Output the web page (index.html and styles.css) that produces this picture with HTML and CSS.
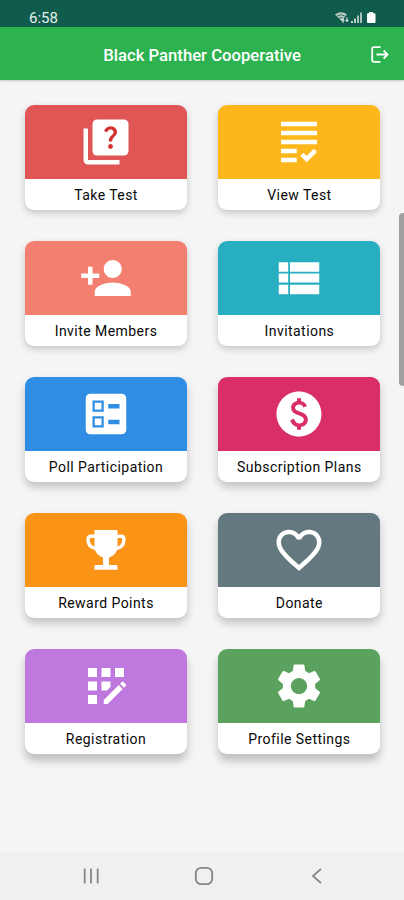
FILE: index.html
```
<!DOCTYPE html>
<html lang="en">
<head>
<meta charset="utf-8">
<title>Black Panther Cooperative</title>
<link rel="stylesheet" href="styles.css">
</head>
<body>
<div class="screen">
  <div class="status">
    <span class="time">6:58</span>
    <svg class="signals" width="44" height="14" viewBox="0 0 44 14">
      <path d="M1 3.500Q7-1 13 3.500L7.500 10z" fill="#b9cdc6"/>
      <path d="M3 5q4-2.500 8 0M5 7.200q2-1.200 4 0" fill="none" stroke="#0f5c4c" stroke-width=".8"/>
      <path d="M9 8v4M7.700 9.500L9 8l1.300 1.500M13 6.500v4M11.700 9l1.300 1.500L14.300 9" fill="none" stroke="#e4eeea" stroke-width="1.100"/>
      <path d="M17 10h2v2h-2zM20 7.500h2V12h-2z" fill="#b9cdc6"/>
      <path d="M23 4.500h2V12h-2zM26 1.500h2V12h-2z" fill="#a7c0b8"/>
      <path d="M35 1h4v1.200h1.500q1 0 1 1V11q0 1-1 1h-6.500q-1 0-1-1V3.200q0-1 1-1h1z" fill="#fff"/>
    </svg>
  </div>
  <header class="bar">
    <h1 class="title">Black Panther Cooperative</h1>
    <svg class="logout" width="18" height="17" viewBox="0 0 18 17" fill="none" stroke="#fff" stroke-width="1.800">
      <path d="M9.500 1.200H3Q1.200 1.200 1.200 3v11q0 1.800 1.800 1.800h6.500M5.500 8.500h11M12.600 4.500l4 4-4 4"/>
    </svg>
  </header>
  <main class="grid">
    <section class="card"><div class="tile red"><svg class="icon" viewBox="0 0 24 24"><path d="M4 6H2v14c0 1.100.9 2 2 2h14v-2H4z"/><rect x="6" y="2" width="16" height="16" rx="2"/><path class="question" d="M14.010 15c-.59 0-1.050-.47-1.050-1.050 0-.59.47-1.040 1.050-1.040.59 0 1.040.45 1.040 1.040-.01.58-.45 1.050-1.040 1.050zm2.500-6.170c-.63.93-1.230 1.210-1.560 1.810-.13.24-.18.4-.18 1.180h-1.520c0-.41-.06-1.080.26-1.650.41-.73 1.180-1.160 1.630-1.800.48-.68.21-1.940-1.140-1.940-.88 0-1.320.67-1.500 1.230l-1.370-.57C11.510 5.960 12.520 5 13.990 5c1.230 0 2.080.56 2.510 1.260.37.61.58 1.730.01 2.570z"/></svg></div><div class="label">Take Test</div></section>
    <section class="card"><div class="tile amber"><svg class="icon" viewBox="0 0 24 24"><path d="M4 3h16v2H4zM4 7h16v2H4zM4 11h16v2H4zM4 15h7v2H4zM4 19h7v2H4zM15.410 18.170L14 16.750l-1.410 1.410L15.410 21 20 16.420 18.580 15z"/></svg></div><div class="label">View Test</div></section>
    <section class="card"><div class="tile coral"><svg class="icon" viewBox="0 0 24 24"><path d="M15 12c2.210 0 4-1.790 4-4s-1.790-4-4-4-4 1.790-4 4 1.790 4 4 4zm-9-2V7H4v3H1v2h3v3h2v-3h3v-2H6zm9 4c-2.670 0-8 1.340-8 4v2h16v-2c0-2.660-5.330-4-8-4z"/></svg></div><div class="label">Invite Members</div></section>
    <section class="card"><div class="tile teal"><svg class="icon" viewBox="0 0 24 24"><path d="M3 5h4.200v4.200H3zM3 10h4.200v4H3zM3 15h4.200v4.200H3zM8 5h13v4.200H8zM8 10h13v4H8zM8 15h13v4.200H8z"/></svg></div><div class="label">Invitations</div></section>
    <section class="card"><div class="tile blue"><svg class="icon" viewBox="0 0 24 24"><path fill-rule="evenodd" d="M13 9.500h5v-2h-5v2zm0 7h5v-2h-5v2zm6 4.500H5c-1.100 0-2-.9-2-2V5c0-1.100.9-2 2-2h14c1.100 0 2 .9 2 2v14c0 1.100-.9 2-2 2zM6 11h5V6H6v5zm1-4h3v3H7V7zM6 18h5v-5H6v5zm1-4h3v3H7v-3z"/></svg></div><div class="label">Poll Participation</div></section>
    <section class="card"><div class="tile pink"><svg class="icon" viewBox="0 0 24 24"><path d="M12 2C6.480 2 2 6.480 2 12s4.480 10 10 10 10-4.480 10-10S17.520 2 12 2zm.88 15.760V19h-1.750v-1.290c-.74-.18-2.390-.77-3.020-2.960l1.650-.67c.06.22.58 2.090 2.400 2.090.93 0 1.980-.48 1.980-1.610 0-.96-.7-1.460-2.280-2.030-1.100-.39-3.350-1.030-3.350-3.310 0-.1.01-2.400 2.620-2.960V5h1.750v1.240c1.840.32 2.510 1.790 2.660 2.230l-1.580.67c-.11-.35-.59-1.340-1.900-1.340-.7 0-1.810.37-1.810 1.390 0 .95.86 1.310 2.640 1.900 2.400.83 3.010 2.050 3.010 3.450 0 2.630-2.500 3.130-3.020 3.220z"/></svg></div><div class="label">Subscription Plans</div></section>
    <section class="card"><div class="tile orange"><svg class="icon" viewBox="0 0 54 54"><path d="M16.500 7h21q1 0 1 1v16q0 7.500-8.500 10.500V42h7.500q1 0 1 1v3.700h-23V43q0-1 1-1H24v-7.500Q15.500 31.500 15.500 24V8q0-1 1-1z"/><path d="M16.500 13.300h-4.500q-3 0-3 3c0 6 3.500 9 9 9.500M37.500 13.300h4.500q3 0 3 3c0 6-3.500 9-9 9.500" fill="none" stroke="#fff" stroke-width="3.400"/></svg></div><div class="label">Reward Points</div></section>
    <section class="card"><div class="tile slate"><svg class="icon" viewBox="0 0 24 24"><path d="M16.500 3c-1.740 0-3.410.81-4.500 2.090C10.910 3.810 9.240 3 7.500 3 4.420 3 2 5.420 2 8.500c0 3.780 3.400 6.860 8.550 11.540L12 21.350l1.450-1.320C18.600 15.360 22 12.280 22 8.500 22 5.420 19.580 3 16.500 3zm-4.400 15.550l-.1.100-.1-.1C7.140 14.240 4 11.390 4 8.500 4 6.500 5.500 5 7.500 5c1.540 0 3.040.99 3.570 2.360h1.870C13.460 5.990 14.960 5 16.500 5c2 0 3.500 1.500 3.500 3.500 0 2.890-3.140 5.740-7.900 10.050z"/></svg></div><div class="label">Donate</div></section>
    <section class="card"><div class="tile purple"><svg class="icon" viewBox="0 0 24 24"><path d="M10 4h4v4h-4zM4 16h4v4H4zM4 10h4v4H4zM4 4h4v4H4zM14 12.420V10h-4v4h2.420zM20.880 11.290l-1.170-1.170c-.16-.16-.42-.16-.58 0l-.88.88L20 12.750l.88-.88c.16-.16.16-.42 0-.58zM11 18.250V20h1.750l6.670-6.670-1.750-1.750zM16 4h4v4h-4z"/></svg></div><div class="label">Registration</div></section>
    <section class="card"><div class="tile green"><svg class="icon" viewBox="0 0 24 24"><path d="M19.140 12.940c.04-.3.060-.61.060-.94 0-.32-.02-.64-.07-.94l2.030-1.580c.18-.14.23-.41.12-.61l-1.920-3.320c-.12-.22-.37-.29-.59-.22l-2.390.96c-.5-.38-1.030-.7-1.620-.94l-.36-2.540c-.04-.24-.24-.41-.48-.41h-3.840c-.24 0-.43.17-.47.41l-.36 2.540c-.59.24-1.130.57-1.620.94l-2.390-.96c-.22-.08-.47 0-.59.22L2.740 8.870c-.12.21-.08.47.12.61l2.030 1.580c-.05.3-.09.63-.09.94s.02.64.07.94l-2.030 1.580c-.18.14-.23.41-.12.61l1.920 3.320c.12.22.37.29.59.22l2.390-.96c.5.38 1.030.7 1.620.94l.36 2.540c.05.24.24.41.48.41h3.840c.24 0 .44-.17.47-.41l.36-2.540c.59-.24 1.130-.56 1.620-.94l2.390.96c.22.08.47 0 .59-.22l1.920-3.320c.12-.22.07-.47-.12-.61l-2.010-1.580zM12 15.600c-1.980 0-3.600-1.620-3.600-3.600s1.620-3.600 3.600-3.600 3.600 1.620 3.600 3.600-1.620 3.600-3.600 3.600z"/></svg></div><div class="label">Profile Settings</div></section>
  </main>
  <nav class="nav">
    <svg width="18" height="18" viewBox="0 0 18 18" fill="none" stroke="#858585" stroke-width="1.800"><path d="M2.700 1.500v15M9 1.500v15M15.700 1.500v15"/></svg>
    <svg width="20" height="20" viewBox="0 0 20 20" fill="none" stroke="#858585" stroke-width="1.800"><rect x="1.800" y="1.800" width="16.400" height="16.400" rx="5.500"/></svg>
    <svg width="18" height="18" viewBox="0 0 18 18" fill="none" stroke="#858585" stroke-width="1.800"><path d="M13 1.800L5 9l8 7.200"/></svg>
  </nav>
  <div class="thumb"></div>
</div>
</body>
</html>
```
FILE: styles.css
```
body { margin: 0; font-family: Roboto, "Liberation Sans", sans-serif; }
.screen {
  position: relative;
  display: flex;
  flex-direction: column;
  width: 404px;
  height: 900px;
  overflow: hidden;
  background: #f5f5f5;
}
.status {
  display: flex;
  justify-content: space-between;
  box-sizing: border-box;
  height: 27px;
  padding: 9px 26px 0 29px;
  background: #0f5c4c;
  color: #e8f0ed;
}
.time { font-size: 15px; line-height: 18px; }
.signals { margin-top: 2px; }
.bar {
  display: grid;
  grid-template-columns: 1fr auto 1fr;
  align-items: center;
  height: 53px;
  background: #2cb34f;
  box-shadow: 0 1px 2px rgba(0, 0, 0, .2);
  color: #fff;
}
.title {
  grid-column: 2;
  margin: 4px 0 0;
  font-size: 16.7px;
  font-weight: 500;
  line-height: 22px;
  white-space: nowrap;
}
.logout { justify-self: end; margin: 1px 15px 0 0; }
.grid {
  flex: 1;
  display: grid;
  grid-template-columns: 162px 162px;
  grid-auto-rows: 105px;
  align-content: start;
  gap: 31px 31.4px;
  padding: 25px 0 0 25px;
}
.card {
  overflow: hidden;
  border-radius: 9px;
  background: #fff;
  box-shadow: 0 3px 7px rgba(0, 0, 0, .2);
}
.card:nth-child(n+5) { box-shadow: 0 5px 8px rgba(0, 0, 0, .21); }
.card:nth-child(n+9) { box-shadow: 0 7px 8px rgba(0, 0, 0, .22); }
.tile {
  display: flex;
  align-items: center;
  justify-content: center;
  height: 74px;
}
.icon { width: 54px; height: 54px; fill: #fff; }
.icon .question { fill: #d3302f; }
.red { background: #df5655; }
.amber { background: #fdb71a; }
.coral { background: #f37f71; }
.teal { background: #27aec1; }
.blue { background: #2f8de4; }
.pink { background: #d92e6a; }
.orange { background: #fb9317; }
.slate { background: #64787f; }
.purple { background: #bf78de; }
.green { background: #5aa25e; }
.label {
  padding-top: 1px;
  color: #080808;
  font-size: 14px;
  font-weight: 450;
  letter-spacing: .45px;
  line-height: 31px;
  text-align: center;
  white-space: nowrap;
}
.nav {
  display: flex;
  align-items: center;
  justify-content: center;
  gap: 94px;
  height: 48px;
  padding-left: 4px;
  background: #f0f0f0;
}
.thumb {
  position: absolute;
  top: 213px;
  right: 0;
  width: 5px;
  height: 173px;
  border-radius: 4px 0 0 4px;
  background: #a0a0a0;
}
```
